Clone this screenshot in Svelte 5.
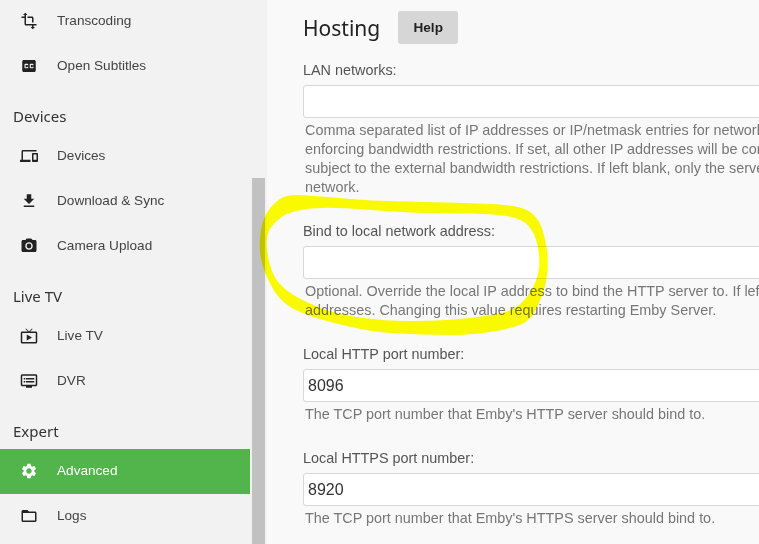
<script>
	const icons = {
		transform: 'M22 18v-2H8V4h2L7 1 4 4h2v2H2v2h4v8c0 1.1.9 2 2 2h8v2h-2l3 3 3-3h-2v-2h4zM10 8h6v6h2V8c0-1.1-.9-2-2-2h-6v2z',
		cc: 'M19 4H5c-1.11 0-2 .9-2 2v12c0 1.1.89 2 2 2h14c1.1 0 2-.9 2-2V6c0-1.1-.9-2-2-2zm-8 7H9.5v-.5h-2v3h2V13H11v1c0 .55-.45 1-1 1H7c-.55 0-1-.45-1-1v-4c0-.55.45-1 1-1h3c.55 0 1 .45 1 1v1zm7 0h-1.5v-.5h-2v3h2V13H18v1c0 .55-.45 1-1 1h-3c-.55 0-1-.45-1-1v-4c0-.55.45-1 1-1h3c.55 0 1 .45 1 1v1z',
		devices: 'M4 6h18V4H4c-1.1 0-2 .9-2 2v11H0v3h14v-3H4V6zm19 2h-6c-.55 0-1 .45-1 1v10c0 .55.45 1 1 1h6c.55 0 1-.45 1-1V9c0-.55-.45-1-1-1zm-1 9h-4v-7h4v7z',
		download: 'M19 9h-4V3H9v6H5l7 7 7-7zM5 18v2h14v-2H5z',
		camera: 'M12 8.8a3.2 3.2 0 1 0 0 6.4 3.2 3.2 0 0 0 0-6.4zM9 2L7.17 4H4c-1.1 0-2 .9-2 2v12c0 1.1.9 2 2 2h16c1.1 0 2-.9 2-2V6c0-1.1-.9-2-2-2h-3.17L15 2H9zm3 15c-2.76 0-5-2.24-5-5s2.24-5 5-5 5 2.24 5 5-2.24 5-5 5z',
		tv: 'M21 6h-7.59l3.29-3.29L16 2l-4 4-4-4-.71.71L10.59 6H3c-1.1 0-2 .89-2 2v12c0 1.1.9 2 2 2h18c1.1 0 2-.9 2-2V8c0-1.11-.9-2-2-2zm0 14H3V8h18v12zM9 10v8l7-4z',
		dvr: 'M21 3H3c-1.1 0-2 .9-2 2v12c0 1.1.9 2 2 2h5v2h8v-2h5c1.1 0 1.99-.9 1.99-2L23 5c0-1.1-.9-2-2-2zm0 14H3V5h18v12zm-2-9H8v2h11V8zm0 4H8v2h11v-2zM7 8H5v2h2V8zm0 4H5v2h2v-2z',
		settings: 'M19.14 12.94c.04-.3.06-.61.06-.94 0-.32-.02-.64-.07-.94l2.03-1.58c.18-.14.23-.41.12-.61l-1.92-3.32c-.12-.22-.37-.29-.59-.22l-2.39.96c-.5-.38-1.03-.7-1.62-.94l-.36-2.54c-.04-.24-.24-.41-.48-.41h-3.84c-.24 0-.43.17-.47.41l-.36 2.54c-.59.24-1.13.57-1.62.94l-2.39-.96c-.22-.08-.47 0-.59.22L2.74 8.87c-.12.21-.08.47.12.61l2.03 1.58c-.05.3-.09.63-.09.94s.02.64.07.94l-2.03 1.58c-.18.14-.23.41-.12.61l1.92 3.32c.12.22.37.29.59.22l2.39-.96c.5.38 1.03.7 1.62.94l.36 2.54c.05.24.24.41.48.41h3.84c.24 0 .44-.17.47-.41l.36-2.54c.59-.24 1.13-.56 1.62-.94l2.39.96c.22.08.47 0 .59-.22l1.92-3.32c.12-.22.07-.47-.12-.61l-2.01-1.58zM12 15.6c-1.98 0-3.6-1.62-3.6-3.6s1.62-3.6 3.6-3.6 3.6 1.62 3.6 3.6-1.62 3.6-3.6 3.6z',
		folder: 'M20 6h-8l-2-2H4c-1.1 0-1.99.9-1.99 2L2 18c0 1.1.9 2 2 2h16c1.1 0 2-.9 2-2V8c0-1.1-.9-2-2-2zm0 12H4V8h16v10z'
	};

	const sections = [
		{ items: [{ label: 'Transcoding', icon: 'transform' }, { label: 'Open Subtitles', icon: 'cc' }] },
		{ title: 'Devices', items: [{ label: 'Devices', icon: 'devices' }, { label: 'Download & Sync', icon: 'download' }, { label: 'Camera Upload', icon: 'camera' }] },
		{ title: 'Live TV', items: [{ label: 'Live TV', icon: 'tv' }, { label: 'DVR', icon: 'dvr' }] },
		{ title: 'Expert', items: [{ label: 'Advanced', icon: 'settings', active: true }, { label: 'Logs', icon: 'folder' }] }
	];

	const fields = [
		{
			label: 'LAN networks:',
			value: '',
			help: [
				'Comma separated list of IP addresses or IP/netmask entries for networks',
				'enforcing bandwidth restrictions. If set, all other IP addresses will be considered',
				"subject to the external bandwidth restrictions. If left blank, only the server's subnet",
				'network.'
			]
		},
		{
			label: 'Bind to local network address:',
			value: '',
			help: [
				'Optional. Override the local IP address to bind the HTTP server to. If left empty,',
				'addresses. Changing this value requires restarting Emby Server.'
			]
		},
		{ label: 'Local HTTP port number:', value: '8096', help: ["The TCP port number that Emby's HTTP server should bind to."] },
		{ label: 'Local HTTPS port number:', value: '8920', help: ["The TCP port number that Emby's HTTPS server should bind to."] }
	];

	const outer = [[95,12],[200,20],[350,32],[500,36],[700,40],[805,50],[850,85],[870,140],[880,210],[875,275],[855,335],[825,392],[770,415],[650,435],[500,435],[350,425],[220,395],[125,365],[70,325],[40,272],[20,222],[12,170],[20,95],[50,45]];
	const inner = [[100,65],[60,95],[35,130],[35,190],[55,260],[90,300],[140,330],[220,365],[350,390],[500,395],[650,385],[770,365],[820,320],[850,260],[855,200],[840,130],[800,85],[700,70],[500,70],[350,60],[200,50]];

	// closed curve through the midpoints of a traced outline
	function smooth(pts) {
		const mid = (a, b) => [(a[0] + b[0]) / 2, (a[1] + b[1]) / 2];
		const start = mid(pts[pts.length - 1], pts[0]);
		let d = `M${start[0]} ${start[1]}`;
		pts.forEach((p, i) => {
			const m = mid(p, pts[(i + 1) % pts.length]);
			d += `Q${p[0]} ${p[1]} ${m[0]} ${m[1]}`;
		});
		return d + 'Z';
	}

	const scribble = smooth(outer) + smooth(inner);
</script>

<div class="page">
	<aside>
		<nav class="sidebar">
			{#each sections as s}
				<div class="section">
					{#if s.title}<h3>{s.title}</h3>{/if}
					{#each s.items as item}
						<div class="item" class:active={item.active}>
							<svg viewBox="0 0 24 24" width="18" height="18"><path d={icons[item.icon]} /></svg>
							<span>{item.label}</span>
						</div>
					{/each}
				</div>
			{/each}
		</nav>
		<div class="thumb"></div>
	</aside>
	<main>
		<div class="heading">
			<h2>Hosting</h2>
			<button>Help</button>
		</div>
		{#each fields as f}
			<div class="field">
				<label>{f.label}<input type="text" value={f.value} /></label>
				<div class="help">
					{#each f.help as line}<div>{line}</div>{/each}
				</div>
			</div>
		{/each}
	</main>
	<svg class="scribble" viewBox="0 0 930 450" width="310" height="150">
		<path d={scribble} fill-rule="evenodd" />
	</svg>
</div>

<style>
	:global(body) {
		margin: 0;
		overflow: hidden;
	}
	.page {
		position: relative;
		display: flex;
		width: 759px;
		height: 544px;
		overflow: hidden;
		font-family: "Liberation Sans", Arial, sans-serif;
		background: #f9f9f9;
	}
	aside {
		flex: none;
		display: flex;
		width: 267px;
		background: #f2f2f2;
	}
	.sidebar {
		flex: none;
		width: 250px;
		margin-right: 2px;
		margin-top: -1px;
	}
	.section {
		margin-bottom: 16px;
	}
	h3 {
		margin: 0;
		padding-left: 13px;
		height: 29px;
		font: 400 15px/22px "Noto Sans", sans-serif;
		color: #333;
	}
	.item {
		display: flex;
		align-items: center;
		box-sizing: border-box;
		height: 45px;
		padding: 0 0 2px 20px;
		font-size: 13.6px;
		color: #444;
	}
	.item svg {
		flex: none;
		margin-right: 19px;
		fill: #222;
	}
	.item.active {
		background: #52b54b;
		color: #fff;
	}
	.item.active svg {
		fill: #fff;
	}
	.thumb {
		flex: none;
		width: 13px;
		height: 366px;
		margin-top: 178px;
		background: #c1c1c1;
	}
	main {
		flex: 1;
		min-width: 0;
		padding: 11px 0 0 36px;
		overflow: hidden;
	}
	.heading {
		display: flex;
		align-items: center;
		height: 33px;
		margin-bottom: 18px;
	}
	h2 {
		margin: 0 18px 0 0;
		font: 400 21px "Noto Sans", sans-serif;
		color: #222;
	}
	button {
		width: 60px;
		height: 33px;
		border: 0;
		border-radius: 3px;
		background: #d6d6d6;
		font: 700 13.6px "Liberation Sans", sans-serif;
		color: #222;
	}
	.field {
		margin-bottom: 26px;
	}
	label {
		display: block;
		font-size: 14.4px;
		line-height: 16px;
		color: #555;
	}
	input {
		display: block;
		box-sizing: border-box;
		width: 600px;
		height: 33px;
		margin-top: 7px;
		padding: 0 4px;
		border: 1px solid #d8d8d8;
		border-radius: 3px;
		background: #fff;
		font: 16px "Liberation Sans", sans-serif;
		color: #333;
	}
	.help {
		margin-top: 3px;
		padding-left: 2px;
		font-size: 14.4px;
		line-height: 19px;
		color: #777;
		white-space: nowrap;
	}
	.scribble {
		position: absolute;
		left: 255px;
		top: 190px;
		mix-blend-mode: multiply;
	}
	.scribble path {
		fill: #ffff00;
	}
</style>
